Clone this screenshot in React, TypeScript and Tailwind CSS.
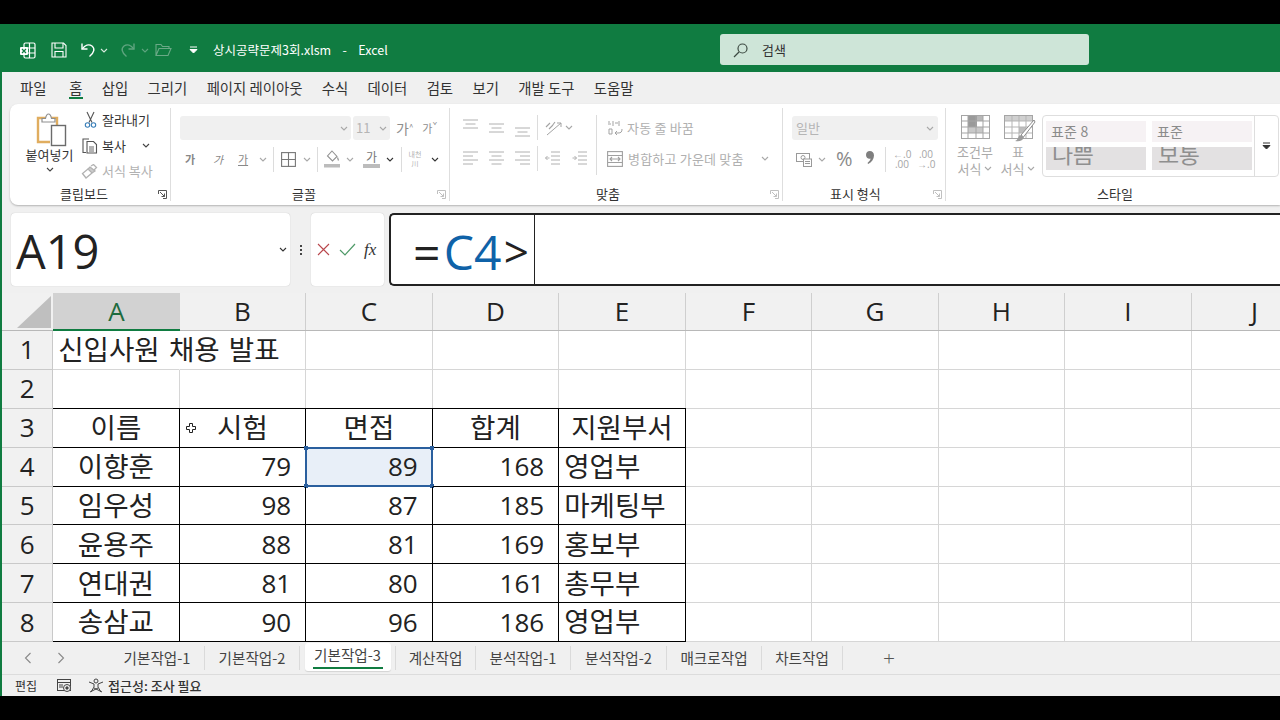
import React from "react";

const KR = "[font-family:'Noto_Sans_CJK_KR','Noto_Sans',sans-serif]";

function Chev({ c = "#a8a8a8", className = "" }: { c?: string; className?: string }) {
  return (
    <svg width="8" height="5" viewBox="0 0 8 5" className={className} fill="none" stroke={c} strokeWidth="1.1">
      <path d="M1 1l3 3 3-3" />
    </svg>
  );
}

function Launcher({ c = "#b5b5b5" }: { c?: string }) {
  return (
    <svg width="9" height="9" viewBox="0 0 9 9" fill="none" stroke={c} strokeWidth="1">
      <path d="M.5 4V.5H8.500V8.500H5" />
      <path d="M2 2l4.500 4.500M6.500 3.500v3h-3" />
    </svg>
  );
}

function Sep({ h = "h-[25px]", className = "" }: { h?: string; className?: string }) {
  return <div className={`w-px bg-[#dcdcdc] ${h} ${className}`} />;
}

function Lines({ kind, className = "" }: { kind: string; className?: string }) {
  const paths: Record<string, string> = {
    top: "M0 1h15M2.500 5h10M0 9h15",
    mid: "M0 5h15M2.500 9h10M0 13h15",
    bot: "M0 9h15M2.500 13h10M0 17h15",
    left: "M0 1h15M0 5h10M0 9h15M0 13h10",
    center: "M0 1h15M2.500 5h10M0 9h15M2.500 13h10",
    right: "M0 1h15M5 5h10M0 9h15M5 13h10",
    out: "M6 1h9M6 5h9M6 9h9M6 13h9M4.500 7H.5M2.500 5l-2 2 2 2",
    in: "M6 1h9M6 5h9M6 9h9M6 13h9M.5 7h4M2.500 5l2 2-2 2",
  };
  return (
    <svg width="15" height="18" viewBox="0 0 15 18" fill="none" stroke="#b0b0b0" strokeWidth="1" className={className}>
      <path d={paths[kind]} />
    </svg>
  );
}

function ExcelIcon() {
  return (
    <svg width="17" height="17" viewBox="0 0 17 17" fill="none" stroke="#fff" strokeWidth="1.200">
      <rect x="5" y="1" width="11" height="15" rx="1.500" />
      <path d="M5 6h11M5 11h11M10.500 1v15" />
      <rect x="1" y="5" width="8" height="8" rx="1" fill="#fff" stroke="none" />
      <path d="M3 7l4 4M7 7l-4 4" stroke="#107c41" strokeWidth="1.200" />
    </svg>
  );
}

function SaveIcon() {
  return (
    <svg width="16" height="16" viewBox="0 0 16 16" fill="none" stroke="#fff" strokeWidth="1.100">
      <path d="M1 1h11.500L15 3.500V15H1z" />
      <path d="M4 1v5h8V1M4 15V9.500h8V15" />
    </svg>
  );
}

function UndoIcon({ c = "#fff", flip = false }: { c?: string; flip?: boolean }) {
  return (
    <svg width="16" height="16" viewBox="0 0 16 16" fill="none" stroke={c} strokeWidth="1.400" className={flip ? "-scale-x-100" : ""}>
      <path d="M2 1.500V7h5.500" />
      <path d="M2.200 6.800C5 3 9 1.800 12 4c3 2.400 2.500 6.500-2.500 10.500" />
    </svg>
  );
}

function OpenIcon() {
  return (
    <svg width="17" height="14" viewBox="0 0 17 14" fill="none" stroke="#6aa986" strokeWidth="1.100">
      <path d="M1 12.500V1.500h5l1.500 2H14v2M1 12.500h12l3-7H4z" />
    </svg>
  );
}

function Paste() {
  return (
    <svg width="32" height="34" viewBox="0 0 32 34" fill="none">
      <path d="M14 29H2V5h19v7" stroke="#e0ad5f" strokeWidth="2.400" />
      <path d="M6 5.500h3.500C10 3 11 1 12.500 1S15 3 15.500 5.500H19V9H6z" fill="#fff" stroke="#8f8f8f" strokeWidth="1.200" />
      <rect x="15.500" y="12.500" width="14" height="20" fill="#fff" stroke="#6b6b6b" strokeWidth="1.400" />
    </svg>
  );
}

function Scissors() {
  return (
    <svg width="13" height="17" viewBox="0 0 13 17" fill="none" strokeWidth="1.100">
      <path d="M3 1l5 10.500M10 1L5 11.500" stroke="#555" />
      <circle cx="3.500" cy="14" r="2.200" stroke="#3a7fb8" />
      <circle cx="9.500" cy="14" r="2.200" stroke="#3a7fb8" />
    </svg>
  );
}

function CopyIcon() {
  return (
    <svg width="16" height="16" viewBox="0 0 16 16" fill="none" stroke="#555" strokeWidth="1.100">
      <path d="M4 14.500H1V1h6" />
      <path d="M5 3.500h6.500l3 3v8.500H5z" fill="#fff" />
      <path d="M7 9h5M7 11h5M7 13h5" strokeWidth=".9" />
    </svg>
  );
}

function Brush() {
  return (
    <svg width="17" height="15" viewBox="0 0 17 15" fill="none" stroke="#b2b2b2" strokeWidth="1.300">
      <path d="M10 2l2.500-1.500 3 3L13 6" />
      <path d="M9 3l5 4-3 2-4-4z" fill="#ccc" />
      <path d="M7 5L1.500 9.500 5 14l6-5" />
    </svg>
  );
}

function Borders() {
  return (
    <svg width="15" height="15" viewBox="0 0 15 15" fill="none" stroke="#777" strokeWidth="1.100">
      <rect x=".6" y=".6" width="13.800" height="13.800" />
      <path d="M7.500 .6v13.800M.6 7.500h13.800" />
    </svg>
  );
}

function Fill() {
  return (
    <svg width="18" height="18" viewBox="0 0 18 18" fill="none">
      <path d="M9 1l5 5.500-4.500 4.500-5-5z" stroke="#929292" strokeWidth="1.100" />
      <path d="M14.500 7.500l1 3" stroke="#929292" strokeWidth="1.200" />
      <rect x="1" y="14" width="16" height="3.500" fill="#bcbcbc" />
    </svg>
  );
}

function Wrap() {
  return (
    <svg width="16" height="16" viewBox="0 0 16 16" fill="none" stroke="#a3a3a3" strokeWidth="1">
      <path d="M1 2h2M1 4h3M6 1v5M8 3h3M12 1v5M2 9h3v5H2zM8 13h3c3 0 4-1 4-4M8 13l2-2M8 13l2 2" />
    </svg>
  );
}

function Merge() {
  return (
    <svg width="16" height="16" viewBox="0 0 16 16" fill="none" stroke="#a0a0a0" strokeWidth="1.100">
      <rect x=".6" y=".6" width="14.800" height="14.800" />
      <path d="M.6 4.500h14.800M.6 11.500h14.800M3 8h10M5 6l-2 2 2 2M11 6l2 2-2 2" />
    </svg>
  );
}

function Orient({ className = "" }: { className?: string }) {
  return (
    <svg width="18" height="16" viewBox="0 0 18 16" fill="none" stroke="#a3a3a3" strokeWidth="1" className={className}>
      <path d="M2 15L16 3M16 3h-4M16 3v4" />
      <path d="M1 7l4-4M4 9l4-4M7 6l3-4" strokeWidth="1.100" />
    </svg>
  );
}

function CurrencyIcon() {
  return (
    <svg width="16" height="15" viewBox="0 0 16 15" fill="none" stroke="#9a9a9a" strokeWidth="1">
      <rect x=".5" y="1.500" width="13" height="8" />
      <circle cx="7" cy="5.500" r="2" />
      <rect x="7.500" y="7" width="8" height="7.500" fill="#fff" />
      <path d="M9 9.500h5M9 11.500h5" />
    </svg>
  );
}

function Comma() {
  return (
    <svg width="8" height="13" viewBox="0 0 8 13" fill="#7f7f7f">
      <path d="M3.800 0C6.300 0 8 1.800 8 4.400 8 8 5.600 11 2.200 13L1.500 12C3.300 10.600 4.300 9.200 4.600 7.600 4.300 7.800 3.900 7.800 3.500 7.800 1.500 7.800 0 6.200 0 3.900 0 1.600 1.600 0 3.800 0z" />
    </svg>
  );
}

function CondFormat() {
  return (
    <svg width="29" height="24" viewBox="0 0 29 24" fill="none">
      <rect x=".5" y=".5" width="28" height="23" fill="#fff" stroke="#a5a5a5" />
      <rect x="7" y="1" width="9" height="11" fill="#9a9a9a" />
      <rect x="16" y="1" width="6" height="5" fill="#b8b8b8" />
      <rect x="7" y="12" width="15" height="6" fill="#c9c9c9" />
      <path d="M7 1v22M15 1v22M22 1v22M1 6h27M1 12h27M1 18h27" stroke="#a5a5a5" />
    </svg>
  );
}

function TableFormat() {
  return (
    <svg width="32" height="29" viewBox="0 0 32 29" fill="none">
      <rect x=".5" y=".5" width="28" height="23" fill="#fff" stroke="#a5a5a5" />
      <rect x="1" y="1" width="27" height="5" fill="#d0d0d0" />
      <rect x="15" y="12" width="7" height="6" fill="#bdbdbd" />
      <path d="M8 1v22M15 1v22M22 1v22M1 6h27M1 12h27M1 18h27" stroke="#b5b5b5" />
      <path d="M30 5L17 20l2.500 2L31 7z" fill="#fff" stroke="#8b8b8b" />
      <path d="M16 20c-2 1-1 4-5 6 4 1 8 0 9-4z" fill="#9c9c9c" />
    </svg>
  );
}

function Gal({ label, big = false }: { label: string; big?: boolean }) {
  return big ? (
    <div className="w-[100px] h-[23px] bg-[#e3e1e2] text-[#8f8f8f] text-[23px] leading-[13px] pl-[6px] overflow-hidden tracking-[-.5px]">
      {label}
    </div>
  ) : (
    <div className="w-[100px] h-[21px] bg-[#f6f2f4] text-[#8b8b8b] text-[14px] leading-[21px] pl-[5px] tracking-[.2px]">{label}</div>
  );
}

function Group({ w, children, label, labelMl, launcher, last }: { w: string; children: React.ReactNode; label: string; labelMl: string; launcher?: string; last?: boolean }) {
  return (
    <div className={`${w} flex flex-col h-[93px] my-[4px] shrink-0 ${last ? "" : "border-r border-[#dedede]"}`}>
      <div className="h-[76px] shrink-0">{children}</div>
      <div className="flex items-center h-[20px]">
        <span className={`${labelMl} text-[13px] text-[#333] leading-[20px] whitespace-nowrap`}>{label}</span>
        {launcher && <span className="ml-auto mr-[3px] flex">
          <Launcher c={launcher} />
        </span>}
      </div>
    </div>
  );
}

const menu = ["파일", "홈", "삽입", "그리기", "페이지 레이아웃", "수식", "데이터", "검토", "보기", "개발 도구", "도움말"];

const colsL = ["A", "B", "C", "D", "E", "F", "G", "H", "I", "J"];

const rowsData: { n: number; cells: string[] }[] = [
  { n: 3, cells: ["이름", "시험", "면접", "합계", "지원부서"] },
  { n: 4, cells: ["이향훈", "79", "89", "168", "영업부"] },
  { n: 5, cells: ["임우성", "98", "87", "185", "마케팅부"] },
  { n: 6, cells: ["윤용주", "88", "81", "169", "홍보부"] },
  { n: 7, cells: ["연대권", "81", "80", "161", "총무부"] },
  { n: 8, cells: ["송삼교", "90", "96", "186", "영업부"] },
];

const tabs = [
  { t: "기본작업-1", w: "w-[95px]" },
  { t: "기본작업-2", w: "w-[95px]" },
  { t: "기본작업-3", w: "w-[96px]", active: true },
  { t: "계산작업", w: "w-[80px]" },
  { t: "분석작업-1", w: "w-[95px]" },
  { t: "분석작업-2", w: "w-[96px]" },
  { t: "매크로작업", w: "w-[95px]" },
  { t: "차트작업", w: "w-[81px]" },
];

function RowHead({ n }: { n: number }) {
  return (
    <div className="flex items-center justify-center bg-[#f1f1f1] border-b border-r border-[#c9c9c9] text-[26px] text-[#222] font-['Open_Sans',sans-serif]">
      {n}
    </div>
  );
}

function Blank() {
  return <div className="border-b border-r border-[#d6d6d6]" />;
}

export default function App() {
  return (
    <div className={`w-[1280px] h-[720px] bg-black overflow-hidden flex flex-col ${KR}`}>
      <div className="h-[24px] shrink-0" />
      <div className="h-[672px] shrink-0 flex flex-col bg-[#f0f0f0] border-l-2 border-[#107c41] overflow-hidden">
        {/* title bar */}
        <div className="h-[48px] shrink-0 bg-[#107c41] flex items-center -ml-[2px] pt-[4px]">
          <span className="ml-[19px] flex"><ExcelIcon /></span>
          <span className="ml-[15px] flex"><SaveIcon /></span>
          <span className="ml-[13px] flex"><UndoIcon /></span>
          <Chev c="#d9eadf" className="ml-[4px]" />
          <span className="ml-[12px] flex"><UndoIcon c="#5fa47f" flip /></span>
          <Chev c="#5fa47f" className="ml-[5px]" />
          <span className="ml-[6px] flex"><OpenIcon /></span>
          <svg width="9" height="8" viewBox="0 0 9 8" className="ml-[17px]" fill="none" stroke="#fff" strokeWidth="1"><path d="M1 1h7" /><path d="M1 3.500h7L4.500 7z" fill="#fff" /></svg>
          <span className="ml-[15px] w-[507px] text-[12.500px] text-white whitespace-nowrap [word-spacing:1px]">상시공략문제3회.xlsm&nbsp;&nbsp; - &nbsp;&nbsp;Excel</span>
          <div className="w-[369px] h-[31px] rounded-[3px] bg-[#cee5d8] flex items-center -mt-[1px]">
            <svg width="16" height="16" viewBox="0 0 16 16" className="ml-[13px]" fill="none" stroke="#3d4a42" strokeWidth="1.200"><circle cx="9.500" cy="6.500" r="4.500" /><path d="M6 10l-5 5" /></svg>
            <span className="ml-[13px] text-[13px] text-[#333]">검색</span>
          </div>
        </div>
        {/* menu */}
        <div className="h-[32px] shrink-0 flex items-center gap-[19.300px] pl-[18px] text-[14.400px] text-[#333]">
          {menu.map((m) => (
            <div key={m} className={`relative h-[32px] flex items-center whitespace-nowrap ${m === "홈" ? "ml-[3.500px]" : ""}`}>
              {m}
              {m === "홈" && <div className="absolute left-0 right-0 bottom-[5px] h-[2px] bg-[#107c41]" />}
            </div>
          ))}
        </div>
        {/* ribbon */}
        <div className="h-[101px] shrink-0 ml-[8px] bg-white rounded-l-lg shadow-[0_1px_2px_rgba(0,0,0,.25)] flex text-[13px]">
          <Group w="w-[161px]" label="클립보드" labelMl="ml-[50px]" launcher="#555">
            <div className="flex h-full">
              <div className="w-[71px] flex flex-col items-center pt-[5px] pl-[9px]">
                <div className="ml-[3px]"><Paste /></div>
                <span className="mt-[-1px] text-[#333] leading-[18px] whitespace-nowrap -ml-[1px]">붙여넣기</span>
                <Chev c="#444" className="mt-[3px]" />
              </div>
              <div className="flex flex-col -mt-[1px]">
                <div className="flex items-center h-[26px]"><span className="ml-[3px] w-[18px] flex"><Scissors /></span><span className="text-[#333]">잘라내기</span></div>
                <div className="flex items-center h-[26px]"><span className="ml-[1px] w-[20px] flex"><CopyIcon /></span><span className="text-[#333]">복사</span><Chev c="#444" className="ml-[16px]" /></div>
                <div className="flex items-center h-[26px]"><span className="w-[21px] flex"><Brush /></span><span className="text-[#b2b2b2]">서식 복사</span></div>
              </div>
            </div>
          </Group>
          <Group w="w-[279px]" label="글꼴" labelMl="ml-[121px]" launcher="#c0c0c0">
            <div className="pt-[8px] pl-[9px] flex flex-col gap-[7px]">
              <div className="flex items-center h-[24px]">
                <div className="w-[171px] h-[24px] rounded-[3px] bg-[#f0f0f0] flex items-center justify-end pr-[3px]"><Chev /></div>
                <div className="ml-[2px] w-[37px] h-[24px] rounded-[3px] bg-[#f0f0f0] flex items-center justify-between px-[3px] text-[#b5b5b5] text-[13px]">11<Chev /></div>
                <span className="ml-[6px] text-[#8e8e8e] text-[14px] whitespace-nowrap">가<sup className="text-[8px]">^</sup></span>
                <span className="ml-[9px] text-[#8e8e8e] text-[11px] whitespace-nowrap">가<sup className="text-[8px]">ˇ</sup></span>
              </div>
              <div className="flex items-center h-[24px] text-[#888] text-[11px]">
                <span className="ml-[5px] font-bold w-[28px]">가</span>
                <span className="italic w-[25px]">가</span>
                <span className="underline w-[21px]">가</span>
                <Chev />
                <Sep className="ml-[6px]" />
                <span className="ml-[7px] flex"><Borders /></span>
                <Chev className="ml-[7px]" />
                <Sep className="ml-[6px]" />
                <span className="ml-[5px] flex"><Fill /></span>
                <Chev className="ml-[5px]" />
                <span className="ml-[9px] w-[17px] flex flex-col items-center text-[12px] leading-[12px] text-[#777]">가<span className="w-[17px] h-[4px] mt-[1px] bg-[#bcbcbc]" /></span>
                <Chev c="#333" className="ml-[6px]" />
                <Sep className="ml-[7px]" />
                <span className="ml-[5px] w-[16px] text-[7px] leading-[9px] text-[#b0b0b0] text-center">내천<br />川</span>
                <Chev c="#333" className="ml-[8px]" />
              </div>
            </div>
          </Group>
          <Group w="w-[333px]" label="맞춤" labelMl="ml-[146px]" launcher="#c0c0c0">
            <div className="flex pt-[7px] pl-[13px]">
              <div className="flex flex-col gap-[6px] w-[133px]">
                <div className="flex items-center h-[25px]">
                  <Lines kind="top" />
                  <Lines kind="mid" className="ml-[11px]" />
                  <Lines kind="bot" className="ml-[11px]" />
                  <Sep className="ml-[7px]" />
                  <Orient className="ml-[7px]" />
                  <Chev className="ml-[2px]" />
                </div>
                <div className="flex items-center h-[25px]">
                  <Lines kind="left" className="mt-[3px]" />
                  <Lines kind="center" className="ml-[11px] mt-[3px]" />
                  <Lines kind="right" className="ml-[11px] mt-[3px]" />
                  <Sep className="ml-[7px]" />
                  <Lines kind="out" className="ml-[7px] mt-[3px]" />
                  <Lines kind="in" className="ml-[12px] mt-[3px]" />
                </div>
              </div>
              <Sep h="h-[60px]" />
              <div className="flex flex-col gap-[6px] pl-[10px] text-[#b0b0b0] tracking-[.2px]">
                <div className="flex items-center h-[25px]"><Wrap /><span className="ml-[4px] whitespace-nowrap">자동 줄 바꿈</span></div>
                <div className="flex items-center h-[25px]"><Merge /><span className="ml-[5px] whitespace-nowrap">병합하고 가운데 맞춤</span><Chev className="ml-[17px]" /></div>
              </div>
            </div>
          </Group>
          <Group w="w-[163px]" label="표시 형식" labelMl="ml-[47px]" launcher="#c0c0c0">
            <div className="pt-[8px] pl-[9px] flex flex-col gap-[7px]">
              <div className="w-[146px] h-[24px] rounded-[3px] bg-[#f0f0f0] flex items-center justify-between px-[4px] text-[#b5b5b5] text-[13px]">일반<Chev /></div>
              <div className="flex items-center h-[24px]">
                <span className="ml-[4px] flex"><CurrencyIcon /></span>
                <Chev className="ml-[6px]" />
                <span className="ml-[10px] w-[17px] text-[20px] leading-[20px] text-[#8a8a8a] font-['Open_Sans',sans-serif]">%</span>
                <span className="ml-[13px] flex -mt-[3px]"><Comma /></span>
                <Sep className="ml-[11px]" />
                <span className="ml-[7px] w-[16px] text-[10px] leading-[10px] text-[#a5a5a5] font-['Open_Sans',sans-serif] text-right whitespace-nowrap">←.0<br />.00</span>
                <span className="ml-[8px] w-[16px] text-[10px] leading-[10px] text-[#a5a5a5] font-['Open_Sans',sans-serif] text-right whitespace-nowrap">.00<br />→.0</span>
              </div>
            </div>
          </Group>
          <Group w="flex-1" label="스타일" labelMl="ml-[151px]" last>
            <div className="flex pt-[7px]">
              <div className="w-[50px] ml-[4px] flex flex-col items-center">
                <CondFormat />
                <span className="mt-[4px] text-[#aaa] leading-[17px] whitespace-nowrap">조건부</span>
                <span className="text-[#aaa] leading-[17px] whitespace-nowrap flex items-center gap-[3px]">서식<Chev /></span>
              </div>
              <div className="w-[36px] flex flex-col items-center">
                <span className="ml-[4px] h-[24px] flex"><TableFormat /></span>
                <span className="mt-[4px] text-[#aaa] leading-[17px]">표</span>
                <span className="text-[#aaa] leading-[17px] whitespace-nowrap flex items-center gap-[3px]">서식<Chev /></span>
              </div>
              <div className="ml-[6px] w-[237px] h-[62px] rounded-[4px] border border-[#dedede] flex overflow-hidden">
                <div className="grid grid-cols-[100px_100px] gap-x-[6px] gap-y-[5px] pl-[3px] pt-[5px] content-start w-[212px] border-r border-[#dedede]">
                  <Gal label="표준 8" />
                  <Gal label="표준" />
                  <Gal label="나쁨" big />
                  <Gal label="보통" big />
                </div>
                <div className="flex-1 flex items-center justify-center">
                  <svg width="9" height="8" viewBox="0 0 9 8" fill="none" stroke="#333" strokeWidth="1"><path d="M1 1h7" /><path d="M1 3.500h7L4.500 7z" fill="#333" /></svg>
                </div>
              </div>
            </div>
          </Group>
        </div>
        {/* formula bar */}
        <div className="h-[73px] shrink-0 mt-[8px] flex">
          <div className="ml-[9px] w-[279px] h-[73px] rounded-[4px] bg-white shadow-[0_0_1px_rgba(0,0,0,.25)] flex items-center">
            <span className="ml-[5px] pt-[3px] text-[47px] text-[#222] font-['Open_Sans',sans-serif] leading-[70px] flex-1">A19</span>
            <Chev c="#333" className="mr-[3px]" />
          </div>
          <div className="w-[21px] flex flex-col items-center justify-center gap-[2px]">
            <span className="w-[2px] h-[2px] bg-[#444]" /><span className="w-[2px] h-[2px] bg-[#444]" /><span className="w-[2px] h-[2px] bg-[#444]" />
          </div>
          <div className="w-[73px] h-[73px] rounded-[4px] bg-white shadow-[0_0_1px_rgba(0,0,0,.25)] flex items-center">
            <svg width="13" height="13" viewBox="0 0 13 13" className="ml-[6px]" fill="none" stroke="#b9474c" strokeWidth="1.100"><path d="M1 1l11 11M12 1L1 12" /></svg>
            <svg width="17" height="13" viewBox="0 0 17 13" className="ml-[9px]" fill="none" stroke="#4f9a68" strokeWidth="1.200"><path d="M1 7l5 5L16 1" /></svg>
            <span className="ml-[8px] text-[17px] italic text-[#333] font-['Liberation_Serif',serif]">fx</span>
          </div>
          <div className="ml-[5px] flex-1 h-[73px] bg-white border-2 border-r-0 border-[#222] rounded-l-[5px] flex items-center">
            <div className="ml-[22px] w-[122px] pr-[5px] h-full border-r border-[#222] flex items-center justify-between text-[48px] leading-[69px] pt-[3px] font-['Open_Sans',sans-serif] text-[#222]">
              <span>=</span>
              <span className="text-[#0f62a8] ml-[1px]">C4</span>
              <span className="text-[44px]">&gt;</span>
            </div>
          </div>
        </div>
        {/* sheet */}
        <div className="mt-[7px] h-[349px] shrink-0 overflow-hidden bg-white relative">
          <div className="h-[38px] flex bg-[#f1f1f1] border-b border-[#b8b8b8]">
            <div className="w-[51.200px] h-full flex items-center justify-end pr-[2px] shrink-0">
              <svg width="34" height="32" viewBox="0 0 34 32"><path d="M34 0v32H0z" fill="#bfbfbf" /></svg>
            </div>
            {colsL.map((c, i) => (
              <div key={c} className={`w-[126.500px] shrink-0 flex items-center justify-center text-[26px] font-['Open_Sans',sans-serif] ${i === 0 ? "bg-[#d2d2d2] text-[#1d6b3e] border-b-2 border-[#107c41] h-[38px]" : "text-[#222] border-r border-[#cfcfcf]"}`}>
                {c}
              </div>
            ))}
          </div>
          <div className="grid grid-cols-[51.200px_repeat(10,126.500px)] auto-rows-[38.900px] text-[26px] text-[#222] font-['Open_Sans','Noto_Sans_CJK_KR',sans-serif]">
            <RowHead n={1} />
            <div className="border-b border-r border-[#d6d6d6] border-r-transparent flex items-center pl-[5px] whitespace-nowrap text-[27.600px] [word-spacing:2px]">신입사원 채용 발표</div>
            {Array.from({ length: 9 }, (_, i) => <Blank key={i} />)}
            <RowHead n={2} />
            {Array.from({ length: 10 }, (_, i) => <Blank key={i} />)}
            {rowsData.map((r) => (
              <React.Fragment key={r.n}>
                <RowHead n={r.n} />
                {r.cells.map((v, i) => {
                  const num = /^\d+$/.test(v);
                  const left = r.n > 3 && i === 4;
                  const sel = r.n === 4 && i === 2;
                  return (
                    <div key={i} className={`relative border-b border-r border-black flex items-center ${r.n === 3 ? "border-t -mt-px" : ""} ${num ? "justify-end pr-[14px]" : left ? "pl-[5px] text-[27.600px]" : "justify-center text-[27.600px]"} ${sel ? "bg-[#e8eff8]" : ""}`}>
                      {v}
                      {sel && (
                        <div className="absolute -inset-px border-2 border-[#2a5f9e]">
                          <span className="absolute -left-[3px] -top-[3px] w-[4px] h-[4px] bg-[#2a5f9e]" />
                          <span className="absolute -right-[3px] -top-[3px] w-[4px] h-[4px] bg-[#2a5f9e]" />
                          <span className="absolute -left-[3px] -bottom-[3px] w-[4px] h-[4px] bg-[#2a5f9e]" />
                          <span className="absolute -right-[3px] -bottom-[3px] w-[4px] h-[4px] bg-[#2a5f9e]" />
                        </div>
                      )}
                      {r.n === 3 && i === 1 && (
                        <svg width="10" height="10" viewBox="0 0 10 10" className="absolute left-[6px] top-[14px]" fill="#fff" stroke="#222" strokeWidth="1"><path d="M3.500 .5h3v3h3v3h-3v3h-3v-3h-3v-3h3z" /></svg>
                      )}
                    </div>
                  );
                })}
                {Array.from({ length: 5 }, (_, i) => <Blank key={i} />)}
              </React.Fragment>
            ))}
          </div>
        </div>
        {/* tabs */}
        <div className="h-[33px] shrink-0 flex items-center text-[14.600px] text-[#444] border-b border-[#dcdcdc]">
          <svg width="8" height="12" viewBox="0 0 8 12" className="ml-[22px]" fill="none" stroke="#888" strokeWidth="1.100"><path d="M6.500 1l-5 5 5 5" /></svg>
          <svg width="8" height="12" viewBox="0 0 8 12" className="ml-[25px]" fill="none" stroke="#888" strokeWidth="1.100"><path d="M1.500 1l5 5-5 5" /></svg>
          <div className="ml-[45px] flex items-center h-full">
            {tabs.map((t) => (
              <div key={t.t} className={`${t.w} relative flex items-center justify-center whitespace-nowrap h-[24px] border-r border-[#dadada]`}>
                {t.active ? (
                  <div className="relative w-[86px] h-[28px] -mt-[3px] bg-white rounded-[3px] shadow-[0_1px_1px_rgba(0,0,0,.12)] flex items-center justify-center">
                    <span className="-mt-[3px]">{t.t}</span>
                    <span className="absolute left-[8px] right-[8px] bottom-[2px] h-[2px] bg-[#107c41]" />
                  </div>
                ) : (
                  t.t
                )}
              </div>
            ))}
          </div>
          <span className="ml-[40px] text-[21px] leading-[21px] font-light text-[#555] font-['Open_Sans',sans-serif]">+</span>
        </div>
        {/* status */}
        <div className="h-[21px] shrink-0 flex items-center text-[12px] text-[#333]">
          <span className="ml-[13px]">편집</span>
          <svg width="15" height="14" viewBox="0 0 15 14" className="ml-[20px]" fill="none" stroke="#444" strokeWidth="1"><rect x=".5" y=".5" width="13" height="11" /><path d="M.5 3.500h13M2 6h4M2 8h4" /><circle cx="10" cy="9" r="3.500" fill="#f0f0f0" /><circle cx="10" cy="9" r="1.200" fill="#444" /></svg>
          <svg width="16" height="15" viewBox="0 0 16 15" className="ml-[16px]" fill="none" stroke="#444" strokeWidth="1"><circle cx="8" cy="3" r="2" /><path d="M1 4l5 2v3l-3 5M15 4l-5 2v3l3 5M6 10l8 4M10 10l-8 4" /></svg>
          <span className="ml-[4px] text-[13px] font-medium">접근성: 조사 필요</span>
        </div>
      </div>
    </div>
  );
}
